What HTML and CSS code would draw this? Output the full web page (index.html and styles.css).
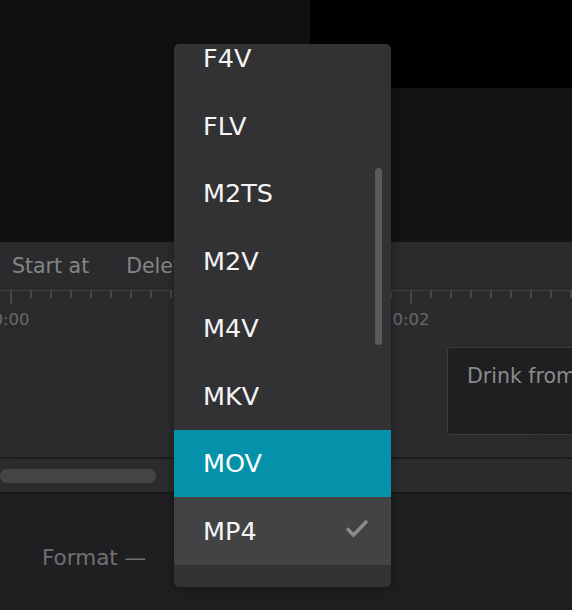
FILE: index.html
```html
<!DOCTYPE html>
<html>
<head>
    <title>Export</title>
    <link rel="stylesheet" href="styles.css">
</head>
<body>
    <div class="preview">
        <div class="preview-left"></div>
        <div class="preview-right">
            <div class="video-black"></div>
        </div>
    </div>

    <div class="toolbar">
        <span>Start at</span>
        <span>Delete</span>
    </div>

    <div class="timeline">
        <div class="ruler">
            <div class="mark"><span>0:00</span></div>
            <div class="mark"><span>0:02</span></div>
        </div>
        <div class="caption">Drink from the fountain</div>
    </div>

    <div class="hscroll">
        <div class="hscroll-thumb"></div>
    </div>

    <div class="bottom">
        <span class="format-label">Format —</span>
    </div>

    <div class="dropdown">
        <ul class="options">
            <li>F4V</li>
            <li>FLV</li>
            <li>M2TS</li>
            <li>M2V</li>
            <li>M4V</li>
            <li>MKV</li>
            <li class="hover">MOV</li>
            <li class="selected">MP4
                <svg class="check" width="24" height="20" viewBox="0 0 24 20">
                    <path d="M2 10.5 L8.5 17 L22 3" fill="none" stroke="#8c8c8e" stroke-width="3.4"/>
                </svg>
            </li>
        </ul>
        <div class="vscroll"></div>
    </div>
</body>
</html>
```

FILE: styles.css
```css
body {
    margin: 0;
    width: 572px;
    height: 610px;
    overflow: hidden;
    background-color: #1f1f21;
    font-family: "DejaVu Sans", "Open Sans", sans-serif;
}

.preview {
    display: flex;
    height: 242px;
}

.preview-left {
    width: 310px;
    background-color: #111113;
}

.preview-right {
    flex: 1;
    background-color: #131315;
}

.video-black {
    height: 88px;
    background-color: #000;
}

.toolbar {
    height: 48px;
    display: flex;
    align-items: center;
    gap: 37px;
    padding-left: 12px;
    background-color: #2b2b2d;
    color: #858587;
    font-size: 20.5px;
}

.timeline {
    height: 167px;
    background: linear-gradient(to right, #2a2a2c, #2c2c2e 60%, #2a2a2c);
    border-top: 1px solid #3f3f41;
    box-sizing: border-box;
    overflow: hidden;
}

.ruler {
    display: flex;
    height: 56px;
    padding-left: 10px;
    background-image: repeating-linear-gradient(to right, transparent 0 10px, #48484a 10px 12px, transparent 12px 20px);
    background-size: 100% 7px;
    background-repeat: no-repeat;
}

.mark {
    flex: none;
    width: 400px;
}

.mark::before {
    content: "";
    display: block;
    width: 2px;
    height: 13px;
    background-color: #48484a;
}

.mark span {
    display: block;
    width: 60px;
    margin-left: -29px;
    margin-top: 6px;
    text-align: center;
    color: #68686a;
    font-size: 16.5px;
}

.caption {
    margin-left: 447px;
    height: 88px;
    box-sizing: border-box;
    padding: 16px 19px;
    background-color: #1f1f21;
    border: 1px solid #3a3a3c;
    border-right: none;
    border-radius: 3px 0 0 3px;
    color: #8a8a8c;
    font-size: 20.5px;
    white-space: nowrap;
}

.hscroll {
    height: 33px;
    border-top: 2px solid #1c1c1e;
    border-bottom: 2px solid #18181a;
    background-color: #2b2b2d;
    display: flex;
    align-items: center;
}

.hscroll-thumb {
    width: 156px;
    height: 14px;
    border-radius: 7px;
    background-color: #444446;
}

.bottom {
    padding: 51px 0 0 42px;
}

.format-label {
    color: #707072;
    font-size: 21.5px;
}

.dropdown {
    position: absolute;
    top: 44px;
    left: 174px;
    width: 217px;
    height: 543px;
    overflow: hidden;
    border-radius: 5px;
    background-color: #323234;
    box-shadow: 0 2px 10px rgba(0, 0, 0, 0.35);
}

.options {
    list-style: none;
    margin: -19.5px 0 0;
    padding: 0;
}

.options li {
    height: 67.5px;
    display: flex;
    align-items: center;
    justify-content: space-between;
    padding: 0 22px 0 29px;
    color: #f4f4f4;
    font-size: 25.5px;
}

.options li.hover {
    background-color: #0591aa;
    color: #fff;
}

.options li.selected {
    background-color: #434345;
}

.check {
    margin-top: -6px;
}

.vscroll {
    position: absolute;
    top: 124px;
    right: 9px;
    width: 7px;
    height: 177px;
    border-radius: 4px;
    background-color: #5a5a5c;
}
```
